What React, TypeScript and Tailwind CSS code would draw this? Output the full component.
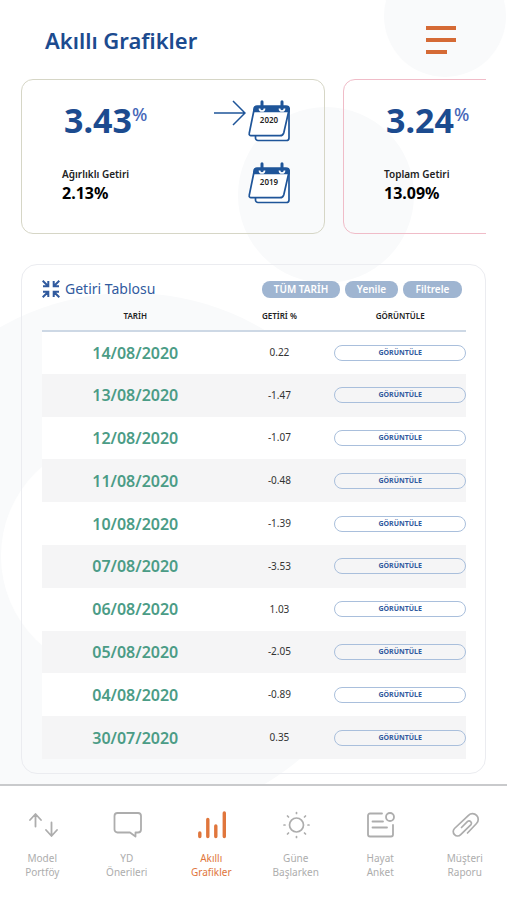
import type { ReactNode } from 'react';

type SummaryCardProps = {
  value: string;
  label: string;
  total: string;
  className: string;
  children?: ReactNode;
};

const returns = [
  { date: '14/08/2020', value: '0.22' },
  { date: '13/08/2020', value: '-1.47' },
  { date: '12/08/2020', value: '-1.07' },
  { date: '11/08/2020', value: '-0.48' },
  { date: '10/08/2020', value: '-1.39' },
  { date: '07/08/2020', value: '-3.53' },
  { date: '06/08/2020', value: '1.03' },
  { date: '05/08/2020', value: '-2.05' },
  { date: '04/08/2020', value: '-0.89' },
  { date: '30/07/2020', value: '0.35' },
];

const iconProps = {
  viewBox: '0 0 32 32',
  fill: 'none',
  stroke: 'currentColor',
  strokeLinecap: 'round',
  strokeLinejoin: 'round',
  'aria-hidden': true,
} as const;

const ArrowsIcon = () => (
  <svg {...iconProps} strokeWidth="1.8" className="size-8">
    <path d="M9.500 16.500V4.500M4 10 9.500 4 15 10M25.500 12.500v13M20 20l5.500 6 5.500-6" />
  </svg>
);

const ChatIcon = () => (
  <svg {...iconProps} strokeWidth="1.8" className="size-8">
    <path d="M6.500 3h20.500a3 3 0 0 1 3 3v13.500a3 3 0 0 1-3 3h-2.500v4L19 22.500H6.500a3 3 0 0 1-3-3V6a3 3 0 0 1 3-3z" />
  </svg>
);

const BarsIcon = () => (
  <svg {...iconProps} strokeWidth="3.400" className="size-8">
    <path d="M4.800 23v3.500M12.800 9.500v17M20.800 16v10.500M29.300 3v23.500" />
  </svg>
);

const SunIcon = () => (
  <svg {...iconProps} strokeWidth="1.7" className="size-8">
    <circle cx="16.500" cy="15" r="7" />
    <path d="M16.500 2.500v1M16.500 26.500v1M4 15h1M28 15h1M7.500 6l1 1M24.500 23l1 1M25.500 6l-1 1M8.500 23l-1 1" />
  </svg>
);

const SurveyIcon = () => (
  <svg {...iconProps} strokeWidth="1.8" className="size-8">
    <path d="M18 3.500H6a2 2 0 0 0-2 2v19a2 2 0 0 0 2 2h21a2 2 0 0 0 2-2V15M8.500 11.500h10.500M8.500 17.500h14.500" />
    <circle cx="26" cy="7" r="4" />
  </svg>
);

const ClipIcon = () => (
  <svg {...iconProps} strokeWidth="1.7" className="size-8">
    <path d="M18.500 23 27.500 13.500a5.700 5.700 0 0 0-8-8.200L5.500 18.500a4.300 4.300 0 0 0 6.200 6.200L22 14.700a2.400 2.400 0 0 0-3.400-3.300L12.500 17.500" />
  </svg>
);

const tabs = [
  { first: 'Model', second: 'Portföy', icon: <ArrowsIcon /> },
  { first: 'YD', second: 'Önerileri', icon: <ChatIcon /> },
  { first: 'Akıllı', second: 'Grafikler', icon: <BarsIcon />, active: true },
  { first: 'Güne', second: 'Başlarken', icon: <SunIcon /> },
  { first: 'Hayat', second: 'Anket', icon: <SurveyIcon /> },
  { first: 'Müşteri', second: 'Raporu', icon: <ClipIcon /> },
];

const CollapseIcon = () => (
  <svg viewBox="0 0 18 18" fill="none" stroke="currentColor" strokeWidth="2" className="size-[18px]" aria-hidden>
    <path d="M0.700.700 6 6M1 6.300h5.300V1M17.300.700 12 6M17 6.300h-5.300V1M.700 17.300 6 12M1 11.700h5.300V17M17.300 17.300 12 12M17 11.700h-5.300V17" />
  </svg>
);

const CalendarButton = ({ year }: { year: string }) => (
  <button className="relative block h-[42px] w-[42px] cursor-pointer text-[#1f5599]">
    <svg viewBox="0 0 42 42" fill="none" stroke="currentColor" strokeWidth="1.7" className="size-full" aria-hidden>
      <path d="M7.500 35.500v2.500a2.500 2.500 0 0 0 2.500 2.500h28.500a2.500 2.500 0 0 0 2.500-2.500V9" fill="white" />
      <path d="M6 10 1.200 33.500a1.800 1.800 0 0 0 1.800 2.200h29a4 4 0 0 0 3.800-3L41 10z" fill="white" />
      <path d="M6 11.500V9a3 3 0 0 1 3-3h29a3.200 3.200 0 0 1 3.200 3.200v2.300z" fill="currentColor" />
      <path d="M14 1.800v6M34 1.800v6" strokeWidth="3" strokeLinecap="round" />
      <path d="M11.500 8.500a2.500 2.500 0 0 0 5 0M31.500 8.500a2.500 2.500 0 0 0 5 0" stroke="white" />
    </svg>
    <span className="absolute inset-x-0 top-[14px] text-center text-[8px] leading-3 font-semibold text-[#222]">{year}</span>
  </button>
);

const SummaryCard = ({ value, label, total, className, children }: SummaryCardProps) => (
  <section className={`flex h-[155px] w-[304px] shrink-0 justify-between rounded-xl border pt-5 pr-[34px] pl-10 ${className}`}>
    <div>
      <p className="flex h-[42px] items-start pl-0.5 text-[#1c4b8f]">
        <span className="text-[34px] leading-10 font-bold">{value}</span>
        <span className="text-lg leading-7 font-medium text-[#4667b8]">%</span>
      </p>
      <p className="mt-6 text-[10px] leading-4 font-semibold text-[#222]">{label}</p>
      <p className="text-base leading-[22px] font-bold text-black">{total}</p>
    </div>
    {children}
  </section>
);

const Backdrop = () => (
  <svg viewBox="0 0 507 785" className="absolute top-0 left-0 -z-10 w-full" aria-hidden>
    <g fill="#f9fafb">
      <circle cx="445" cy="16" r="61" />
      <circle cx="326" cy="195" r="88" />
      <circle cx="130" cy="557" r="264" />
    </g>
    <circle cx="119" cy="556" r="118" fill="white" />
  </svg>
);

const App = () => {
  return (
    <div className="relative isolate flex min-h-screen flex-col overflow-hidden bg-white font-['Noto_Sans',sans-serif]">
      <Backdrop />

      <header className="flex items-center justify-between pt-[22px] pr-[51px] pl-[45px]">
        <h1 className="text-[22px] leading-9 font-semibold text-[#1c4b8f]">Akıllı Grafikler</h1>
        <button aria-label="Menü" className="flex w-[30px] cursor-pointer flex-col gap-2">
          <span className="h-1 w-[30px] bg-[#d56a35]" />
          <span className="h-1 w-[30px] bg-[#d56a35]" />
          <span className="h-1 w-[21px] bg-[#d56a35]" />
        </button>
      </header>

      <main className="px-[21px] pt-[21px]">
        <div className="flex gap-[18px] overflow-hidden">
          <SummaryCard value="3.43" label="Ağırlıklı Getiri" total="2.13%" className="border-[#d6d6c6]">
            <div className="flex">
              <svg viewBox="0 0 32 26" fill="none" stroke="#1f5599" strokeWidth="1.5" className="h-[26px] w-8" aria-hidden>
                <path d="M0 13h31M19 1l12 12-12 12" />
              </svg>
              <div className="ml-0.5 flex flex-col gap-5">
                <CalendarButton year="2020" />
                <CalendarButton year="2019" />
              </div>
            </div>
          </SummaryCard>
          <SummaryCard value="3.24" label="Toplam Getiri" total="13.09%" className="border-[#f0bcc8]" />
        </div>

        <section className="mt-[30px] rounded-2xl border border-[#ebecf0] pt-3 pr-[19px] pb-3.5 pl-5">
          <div className="flex items-center justify-between pr-1">
            <h2 className="flex items-center gap-[5px] text-sm leading-6 text-[#315a9e]">
              <CollapseIcon />
              Getiri Tablosu
            </h2>
            <div className="flex gap-[5px] text-[10px] leading-[17px] font-semibold text-white">
              <button className="w-[78px] cursor-pointer rounded-lg bg-[#9fb5d1]">TÜM TARİH</button>
              <button className="w-[53px] cursor-pointer rounded-lg bg-[#9fb5d1]">Yenile</button>
              <button className="w-[59px] cursor-pointer rounded-lg bg-[#9fb5d1]">Filtrele</button>
            </div>
          </div>

          <table className="mt-1 h-[454px] w-full table-fixed text-center">
            <thead>
              <tr className="border-b-2 border-[#cdd8e5] text-[8px] leading-3 text-[#222]">
                <th className="h-[26px] w-[44%] pb-1 font-semibold">TARİH</th>
                <th className="h-[26px] w-[24%] pb-1 font-semibold">GETİRİ %</th>
                <th className="h-[26px] w-[32%] pb-1 pl-1 font-semibold">GÖRÜNTÜLE</th>
              </tr>
            </thead>
            <tbody>
              {returns.map((row) => (
                <tr key={row.date} className="h-[42px] bg-white even:bg-[#f5f5f6]">
                  <td className="text-base leading-5 font-semibold text-[#4b9c86]">{row.date}</td>
                  <td className="text-[10px] text-[#333]">{row.value}</td>
                  <td className="pl-1">
                    <button className="block h-4 w-full cursor-pointer rounded-lg border border-[#a9bfdc] text-[7px] leading-3 font-bold text-[#315a9e]">
                      GÖRÜNTÜLE
                    </button>
                  </td>
                </tr>
              ))}
            </tbody>
          </table>
        </section>
      </main>

      <nav className="mt-auto grid grid-cols-6 border-t-2 border-[#c9cacc] bg-white pt-6 pb-[21px]">
        {tabs.map((tab) => (
          <a
            key={tab.second}
            href="#"
            className={`flex flex-col items-center text-center text-[10px] leading-[14px] ${tab.active ? 'text-[#e0763c]' : 'text-[#adadad]'}`}
          >
            {tab.icon}
            <span className="mt-[9px]">{tab.first}</span>
            <span>{tab.second}</span>
          </a>
        ))}
      </nav>
    </div>
  );
};

export default App;
